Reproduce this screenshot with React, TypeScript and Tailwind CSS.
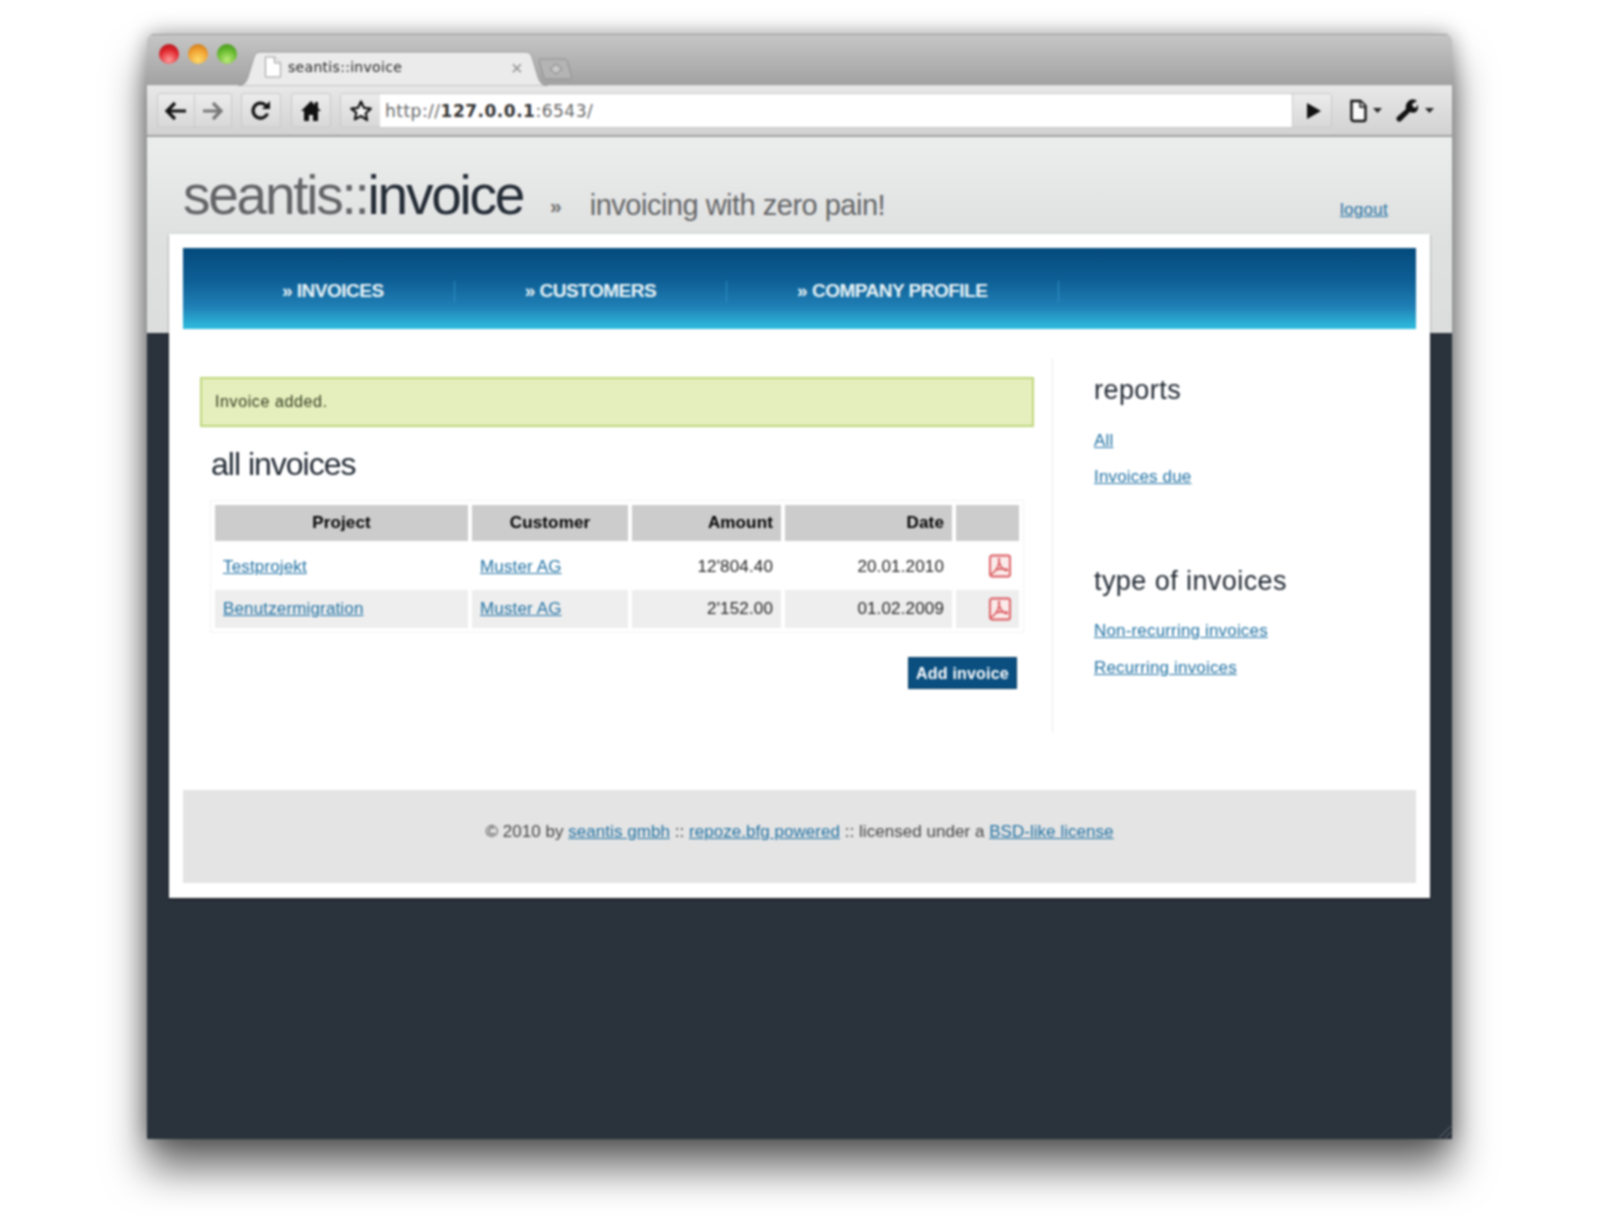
import React from "react";

const linkCls = "text-[#1f70a2] underline";

function Pdf() {
  return (
    <svg width="24" height="24" viewBox="0 0 24 24" className="mx-auto block" fill="none" stroke="#d9555a" strokeWidth="1.8">
      <rect x="2" y="1.5" width="20" height="21" rx="2" fill="#fbeaea" />
      <path d="M11 4c-1 3 1 8 4 11 1.500 1.300 4 1.500 5 1M11 4c1 4-1 10-4 13-1.500 1.500-3 3-4 3.500M7 16c3-1 8-1.500 13-.5" strokeWidth="1.6" />
    </svg>
  );
}

function Btn({ className, children }: { className: string; children?: React.ReactNode }) {
  return (
    <div className={"flex h-[35px] items-center justify-center rounded-[3px] border border-[#c8c8c8] bg-gradient-to-b from-[#ececec] to-[#d8d8d8] " + className}>
      {children}
    </div>
  );
}

const rows = [
  { p: "Testprojekt", c: "Muster AG", a: "12'804.40", d: "20.01.2010", bg: "bg-white", h: "h-[41px]", pt: "pt-[2px]" },
  { p: "Benutzermigration", c: "Muster AG", a: "2'152.00", d: "01.02.2009", bg: "bg-[#eeeeee]", h: "h-[38px]", pt: "pt-0" },
];

export default function App() {
  return (
    <div className="h-[1216px] w-full overflow-hidden bg-white pl-[147px] pt-[34px] font-['Liberation_Sans',Arial,sans-serif]">
      <div className="flex h-[1105px] w-[1305px] flex-col overflow-hidden rounded-t-[6px] shadow-[0_30px_42px_0_rgba(0,0,0,0.58),0_0_22px_rgba(0,0,0,0.38)] blur-[0.8px]">
        {/* tab strip */}
        <div className="relative flex h-[51px] shrink-0 items-start border-t border-[#9a9a9a] bg-gradient-to-b from-[#c6c6c6] to-[#a2a2a2] pl-[12px] pt-[9px]">
          <div className="flex gap-[9px]">
            <span className="h-[20px] w-[20px] rounded-full bg-[radial-gradient(circle_at_50%_80%,#ff9a9a,#e0262d_55%,#a01018)]" />
            <span className="h-[20px] w-[20px] rounded-full bg-[radial-gradient(circle_at_50%_80%,#ffdc6a,#f0a030_55%,#c06a10)]" />
            <span className="h-[20px] w-[20px] rounded-full bg-[radial-gradient(circle_at_50%_80%,#bcec78,#66b82e_55%,#3a8a18)]" />
          </div>
          <svg className="absolute left-[91px] top-[16px]" width="310" height="35" viewBox="0 0 310 35">
            <path d="M0 35c6-1 8-3 10-9l6-20c1-3 3-5 6-5h266c3 0 5 2 6 5l6 20c2 6 4 8 10 9z" fill="#ebebeb" stroke="#9b9b9b" />
          </svg>
          <svg className="absolute left-[391px] top-[22px]" width="36" height="24" viewBox="0 0 36 24">
            <path d="M2 2h24c2 0 3 1 3.500 3l4 14c.5 2 0 3-2 3H9c-2 0-3-1-3.500-3L1 4c-.5-1 0-2 1-2z" fill="#b4b4b4" stroke="#8f8f8f" />
            <path d="M18 7l6 5-6 5-6-5z" fill="#c8c8c8" stroke="#808080" />
          </svg>
          <svg className="absolute left-[117px] top-[21px]" width="18" height="22" viewBox="0 0 18 22">
            <path d="M1.500 1h9l6 6v14h-15z" fill="#fff" stroke="#9a9a9a" />
            <path d="M10.500 1v6h6" fill="#eee" stroke="#9a9a9a" />
          </svg>
          <span className="absolute left-[141px] top-[24px] font-['DejaVu_Sans',sans-serif] text-[14px] leading-[17px] tracking-[0.3px] text-[#222]">seantis::invoice</span>
          <span className="absolute left-[364px] top-[23px] text-[20px] leading-[20px] text-[#8c8c8c]">×</span>
        </div>

        {/* toolbar */}
        <div className="flex h-[52px] shrink-0 items-center border-b-2 border-b-[#9f9f9f] border-t border-t-[#d8d8d8] bg-gradient-to-b from-[#e8e8e8] to-[#d2d2d2] pl-[10px]">
          <Btn className="w-[75px]">
            <svg width="26" height="22" viewBox="0 0 26 22" fill="none" strokeWidth="3.200">
              <path d="M22 11H4M11 3l-8 8 8 8" stroke="#111" />
            </svg>
            <div className="mx-[4px] h-[32px] w-px bg-[#c9c9c9]" />
            <svg className="ml-[1px]" width="26" height="22" viewBox="0 0 26 22" fill="none" strokeWidth="3.200">
              <path d="M3 11h18M13 3l8 8-8 8" stroke="#777" />
            </svg>
          </Btn>
          <Btn className="ml-[9px] w-[40px]">
            <svg width="22" height="22" viewBox="0 0 22 22" fill="none">
              <path d="M17.500 13.500A7.500 7.500 0 1 1 16 5.500" stroke="#111" strokeWidth="3.200" />
              <path d="M12 9h8V1z" fill="#111" />
            </svg>
          </Btn>
          <Btn className="ml-[10px] w-[40px]">
            <svg width="22" height="22" viewBox="0 0 22 22">
              <path d="M11 1 1 11h3v10h5v-6h4v6h5V11h3l-3-3V2h-3v3z" fill="#111" />
            </svg>
          </Btn>
          <div className="ml-[9px] flex h-[35px] w-[992px] overflow-hidden rounded-[3px] border border-[#c8c8c8]">
            <div className="flex w-[39px] shrink-0 items-center justify-center bg-gradient-to-b from-[#ececec] to-[#d8d8d8]">
              <svg width="24" height="24" viewBox="0 0 24 24">
                <path d="M12 2.500l2.900 6.300 6.900.8-5.100 4.700 1.400 6.800L12 17l-6.100 3.400 1.400-6.800L2.200 9.600l6.900-.8z" fill="#f4f4f4" stroke="#111" strokeWidth="2.200" strokeLinejoin="round" />
              </svg>
            </div>
            <div className="flex flex-1 items-center bg-white pl-[5px] pt-[2px] font-['DejaVu_Sans',sans-serif] text-[17px] tracking-[0.5px] text-[#666]">
              http://<span className="font-bold text-[#333]">127.0.0.1</span>:6543/
            </div>
            <div className="flex w-[39px] shrink-0 items-center justify-center border-l border-[#c8c8c8] bg-gradient-to-b from-[#ececec] to-[#d8d8d8] pl-[3px]">
              <svg width="16" height="18" viewBox="0 0 16 18"><path d="M1 1l14 8-14 8z" fill="#111" /></svg>
            </div>
          </div>
          <svg className="ml-[16px]" width="20" height="24" viewBox="0 0 20 24" fill="none">
            <path d="M3.500 2h9l5 5v13c0 1-1 2-2 2h-10c-1 0-2-1-2-2z" fill="#fafafa" stroke="#111" strokeWidth="2.400" />
            <path d="M12 2v6h6" fill="#ccc" stroke="#111" strokeWidth="1.400" />
          </svg>
          <svg className="ml-[5px]" width="9" height="5" viewBox="0 0 9 5"><path d="M0 0h9L4.500 5z" fill="#222" /></svg>
          <svg className="ml-[12px]" width="24" height="24" viewBox="0 0 24 24">
            <path d="M16 1c3-1 6 0 7 1l-5 3 1 3 3 1 2-4c1 3 0 6-2 8-2 1-4 1-6 0l-9 9c-2 2-6-1-4-4l9-8c-1-4 1-7 4-9z" fill="#111" />
          </svg>
          <svg className="ml-[7px]" width="9" height="5" viewBox="0 0 9 5"><path d="M0 0h9L4.500 5z" fill="#222" /></svg>
        </div>

        {/* page */}
        <div className="relative flex flex-1 flex-col bg-[linear-gradient(#eceeee_0,#dfe0e0_100px,#dcdddd_196px,#2a323c_196px)] px-[22px]">
          <div className="flex h-[97px] shrink-0 items-end pb-[4px] pl-[14px]">
            <h1 className="pb-[3px] text-[55px] leading-[64px] tracking-[-2.25px] text-[#636466]">
              seantis::<span className="text-[#232b35]">invoice</span>
            </h1>
            <span className="ml-[27px] pb-[9px] text-[21px] font-bold leading-[30px] text-[#6d6d6d]">»</span>
            <span className="ml-[28px] pb-[8px] text-[29px] leading-[34px] tracking-[-0.5px] text-[#636466]">invoicing with zero pain!</span>
            <a className={"ml-auto mr-[42px] pb-[10px] text-[17px] leading-[20px] tracking-[0.3px] " + linkCls}>logout</a>
          </div>

          <div className="flex shrink-0 flex-col bg-white p-[14px] pb-[15px] shadow-[0_1px_2px_rgba(0,0,0,0.5)]">
            <nav className="flex h-[81px] items-center bg-[linear-gradient(#044a7c,#0e5f95_40%,#1f7fb5_72%,#2fbddf)] pl-[29px] pt-[5px] text-[19px] font-bold leading-[22px] tracking-[-0.5px] text-white">
              <span className="px-[70px] text-[#eaf4f8]">» INVOICES</span>
              <span className="h-[21px] w-px bg-[#2f8fc0]" />
              <span className="px-[70px] text-[#eaf4f8]">» CUSTOMERS</span>
              <span className="h-[21px] w-px bg-[#2f8fc0]" />
              <span className="pl-[70px] pr-[71px] text-[#eaf4f8]">» COMPANY PROFILE</span>
              <span className="h-[21px] w-px bg-[#2f8fc0]" />
            </nav>

            <div className="mt-[30px] flex">
              <div className="h-[373px] w-[870px] border-r border-dotted border-[#d4d4d4] pl-[17px] pr-[18px] pt-[18px]">
                <div className="flex h-[50px] items-center border-2 border-[#bfd67c] bg-[#e5efbd] pl-[13px] text-[16px] tracking-[0.6px] text-[#2f3b20]">Invoice added.</div>
                <h2 className="ml-[11px] mt-[17px] text-[32px] leading-[40px] tracking-[-1px] text-[#1f2731]">all invoices</h2>
                <table className="ml-[10px] mt-[16px] w-[814px] border-separate border-spacing-[4px] border border-[#f2f2f2] text-[17px] tracking-[0.15px] text-[#222]">
                  <colgroup>
                    <col className="w-[253px]" />
                    <col className="w-[156px]" />
                    <col className="w-[149px]" />
                    <col className="w-[167px]" />
                    <col />
                  </colgroup>
                  <thead>
                    <tr className="h-[36px] bg-[#cccccc] font-bold text-[#000]">
                      <th className="text-center">Project</th>
                      <th className="text-center">Customer</th>
                      <th className="pr-[8px] text-right">Amount</th>
                      <th className="pr-[8px] text-right">Date</th>
                      <th></th>
                    </tr>
                  </thead>
                  <tbody>
                    {rows.map((r) => (
                      <tr key={r.p} className={r.h + " " + r.bg}>
                        <td className={"pl-[8px] " + r.pt}><a className={linkCls}>{r.p}</a></td>
                        <td className={"pl-[8px] " + r.pt}><a className={linkCls}>{r.c}</a></td>
                        <td className={"pr-[8px] text-right " + r.pt}>{r.a}</td>
                        <td className={"pr-[8px] text-right " + r.pt}>{r.d}</td>
                        <td className="pl-[24px]"><Pdf /></td>
                      </tr>
                    ))}
                  </tbody>
                </table>
                <div className="mr-[17px] mt-[24px] flex justify-end">
                  <button className="h-[32px] w-[109px] border border-[#083e66] bg-[#0a4f80] pt-[2px] text-[16px] font-bold tracking-[0.2px] text-white">Add invoice</button>
                </div>
              </div>
              <aside className="pl-[41px] text-[17px] leading-[20px] tracking-[0.17px]">
                <h3 className="mt-[14px] text-[27px] leading-[34px] tracking-[0.45px] text-[#1f2731]">reports</h3>
                <p className="mt-[24px]"><a className={linkCls}>All</a></p>
                <p className="mt-[16px]"><a className={linkCls}>Invoices due</a></p>
                <h3 className="mt-[77px] text-[27px] leading-[34px] tracking-[0.43px] text-[#1f2731]">type of invoices</h3>
                <p className="mt-[23px]"><a className={linkCls}>Non-recurring invoices</a></p>
                <p className="mt-[17px]"><a className={linkCls}>Recurring invoices</a></p>
              </aside>
            </div>

            <footer className="mt-[58px] h-[93px] bg-[#e4e4e4] pt-[31px] text-center text-[17px] leading-[22px] tracking-[0.04px] text-[#444]">
              © 2010 by <a className={linkCls}>seantis gmbh</a> :: <a className={linkCls}>repoze.bfg powered</a> :: licensed under a <a className={linkCls}>BSD-like license</a>
            </footer>
          </div>
          <svg className="absolute bottom-[1px] right-[1px]" width="14" height="14" viewBox="0 0 14 14" stroke="#6b727a" fill="none">
            <path d="M2 14 14 2M8 14l6-6" />
          </svg>
        </div>
      </div>
    </div>
  );
}
